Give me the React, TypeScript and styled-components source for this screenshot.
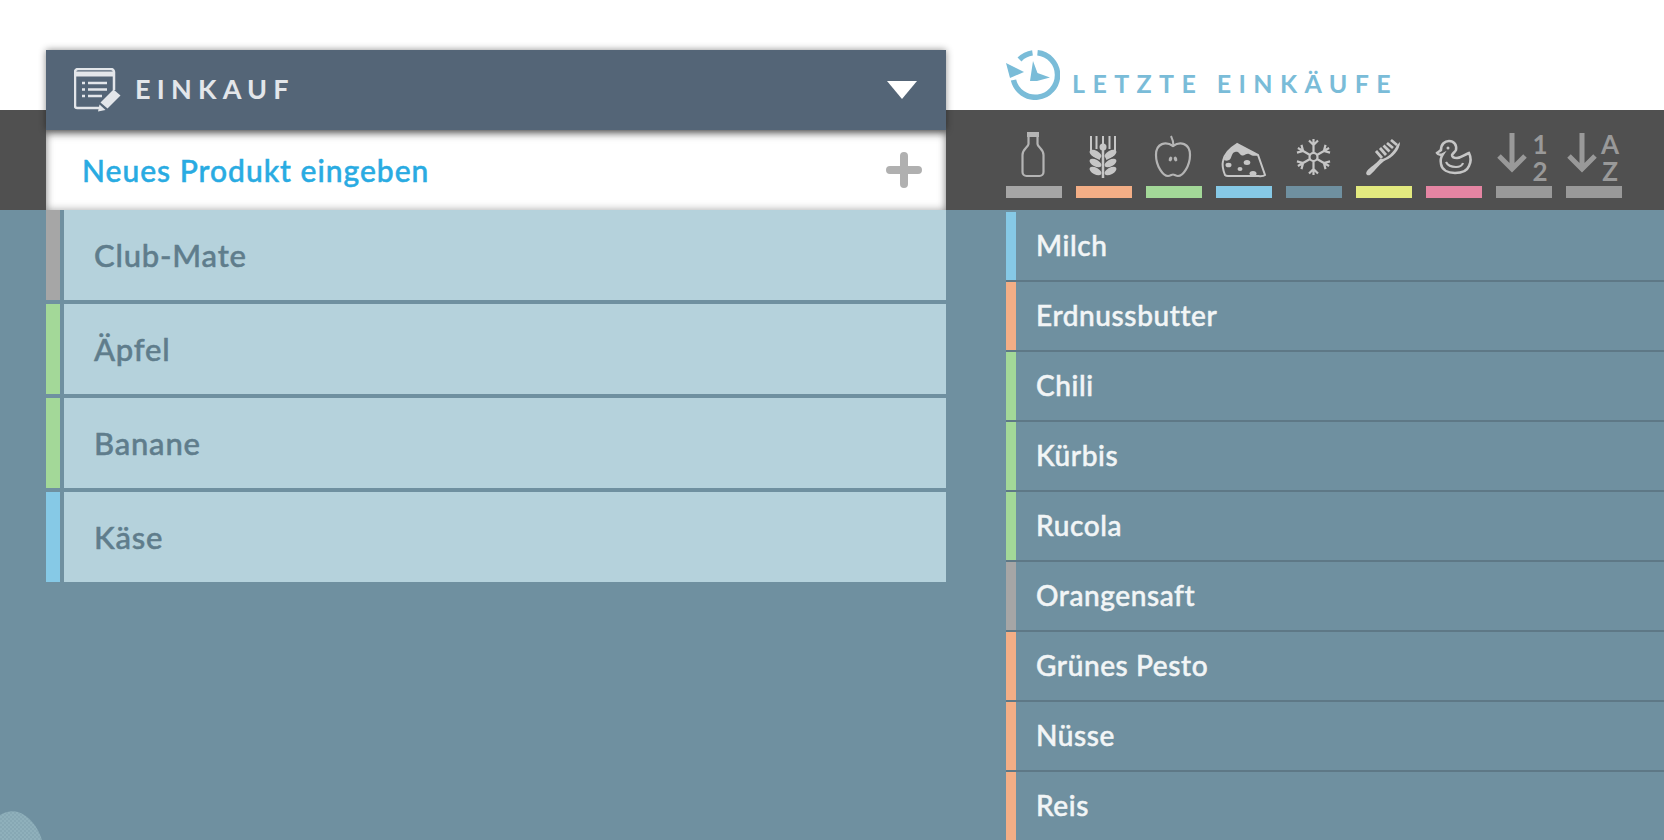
import styled, { createGlobalStyle } from "styled-components";

const GlobalStyle = createGlobalStyle`
  html, body { margin: 0; padding: 0; }
  body { font-family: "Lato", "Noto Sans", sans-serif; }
`;

const COLORS = {
  grey: "#a6a6a6",
  orange: "#f3ae86",
  green: "#a3d898",
  blue: "#86c9e6",
  teal: "#6f90a0",
  yellow: "#e3ea7f",
  pink: "#e585a3",
  sort: "#999999",
};

const Page = styled.div`
  position: relative;
  width: 1664px;
  height: 840px;
  overflow: hidden;
  display: flex;
  gap: 60px;
  padding-left: 46px;
  box-sizing: border-box;
  background: linear-gradient(
    to bottom,
    #fff 0 110px,
    #505050 110px 210px,
    #6f90a0 210px
  );
`;

const Shopping = styled.section`
  width: 900px;
  flex-shrink: 0;
  padding-top: 50px;
`;

const ShoppingHeader = styled.header`
  position: relative;
  z-index: 1;
  height: 80px;
  display: flex;
  align-items: center;
  padding: 0 29px 0 28px;
  background: #546577;
  box-shadow: 0 0 7px rgba(0, 0, 0, 0.45);
`;

const ShoppingTitle = styled.h1`
  margin: 0 0 4px 14px;
  flex: 1;
  font-size: 27px;
  font-weight: 700;
  letter-spacing: 6.2px;
  color: #e3e6ea;
`;

const NewProduct = styled.div`
  height: 80px;
  display: flex;
  align-items: center;
  justify-content: space-between;
  padding: 0 24px 0 36px;
  background: #fff;
  box-shadow: inset 0 6px 8px -2px rgba(0, 0, 0, 0.35),
    inset 0 0 9px rgba(0, 0, 0, 0.35);
`;

const NewProductLabel = styled.span`
  font-size: 30px;
  font-weight: 500;
  -webkit-text-stroke: 0.5px currentColor;
  letter-spacing: 1px;
  color: #29abe2;
`;

const ProductList = styled.ul`
  margin: 0;
  padding: 0;
  list-style: none;
  display: flex;
  flex-direction: column;
  gap: 4px;
`;

const Product = styled.li<{ $color: string }>`
  height: 90px;
  display: flex;
  align-items: center;
  padding-left: 48px;
  font-size: 31px;
  font-weight: 500;
  -webkit-text-stroke: 0.5px currentColor;
  letter-spacing: 0.8px;
  color: #5f7d8c;
  background: linear-gradient(
    to right,
    ${({ $color }) => $color} 0 14px,
    #6f90a0 14px 18px,
    #b5d2dc 18px
  );
`;

const Recent = styled.section`
  flex: 1;
  min-width: 0;
`;

const RecentTitle = styled.div`
  height: 110px;
  box-sizing: border-box;
  padding-top: 50px;
  display: flex;
  gap: 12px;
`;

const RecentLabel = styled.h2`
  margin: 19px 0 0;
  font-size: 25px;
  line-height: 28px;
  font-weight: 700;
  letter-spacing: 7.4px;
  color: #7abcd8;
`;

const Filters = styled.div`
  height: 102px;
  display: flex;
  gap: 14px;
`;

const Filter = styled.div<{ $color: string }>`
  width: 56px;
  height: 88px;
  padding-top: 20px;
  box-sizing: border-box;
  display: flex;
  flex-direction: column;
  gap: 4px;
  &::after {
    content: "";
    flex: 0 0 12px;
    background: ${({ $color }) => $color};
  }
`;

const FilterIcon = styled.svg`
  display: block;
  width: 56px;
  height: 52px;
  overflow: visible;
`;

const RecentList = styled.ul`
  margin: 0;
  padding: 0;
  list-style: none;
`;

const RecentItem = styled.li<{ $color: string }>`
  height: 70px;
  display: flex;
  align-items: center;
  padding: 0 0 2px 30px;
  box-sizing: border-box;
  font-size: 28px;
  font-weight: 500;
  -webkit-text-stroke: 0.5px currentColor;
  letter-spacing: 0.6px;
  color: #f2f5f6;
  border-bottom: 2px solid #5e7886;
  background: linear-gradient(
    to right,
    ${({ $color }) => $color} 0 10px,
    #6f90a0 10px
  );
`;

const Corner = styled.svg`
  position: absolute;
  left: 0;
  bottom: 0;
  width: 44px;
  height: 30px;
`;

const SortGlyph = styled.text`
  font-family: "Lato", sans-serif;
  font-size: 26px;
  font-weight: 700;
  fill: #999999;
  text-anchor: middle;
`;

const STROKE = "#b4b4b4";
const FILL = "#c6c6c6";

function BottleIcon() {
  return (
    <FilterIcon viewBox="0 0 56 52">
      <rect x="21" y="2" width="12" height="5" fill={STROKE} />
      <path
        d="M22.5 7v7c0 3-6 5-6 11v17a4 4 0 0 0 4 4h13a4 4 0 0 0 4-4V25c0-6-6-8-6-11V7"
        fill="none"
        stroke={STROKE}
        strokeWidth="2.200"
      />
    </FilterIcon>
  );
}

function WheatIcon() {
  const leaves = [24, 33, 41];
  return (
    <FilterIcon viewBox="0 0 56 52">
      <g stroke={FILL} strokeWidth="2" fill="none">
        <path d="M15 6v14c0 4 4 7 9 9M20.500 6v13M33.500 6v13M39 6v14c0 4-4 7-9 9" />
        <path d="M27 6v10" />
        <path d="M27 18v30" strokeWidth="2.500" />
      </g>
      <circle cx="27" cy="17" r="3.500" fill={FILL} />
      {leaves.map((y) => (
        <g key={y} fill={FILL}>
          <ellipse cx="19.500" cy={y} rx="6.500" ry="3.300" transform={`rotate(28 19.500 ${y})`} />
          <ellipse cx="34.500" cy={y} rx="6.500" ry="3.300" transform={`rotate(-28 34.500 ${y})`} />
        </g>
      ))}
    </FilterIcon>
  );
}

function AppleIcon() {
  return (
    <FilterIcon viewBox="0 0 56 52">
      <path
        d="M27 16C20 11 10 13 10 25c0 11 7 21 12 21 2 0 4-1.500 5-1.500s3 1.500 5 1.500c5 0 12-10 12-21 0-12-10-14-17-9Z"
        fill="none"
        stroke={STROKE}
        strokeWidth="2.200"
      />
      <path d="M27.500 16c0-4-1-7-2.500-10" fill="none" stroke={STROKE} strokeWidth="2" />
      <ellipse cx="24.500" cy="29" rx="1.700" ry="2.500" fill={STROKE} transform="rotate(20 24.500 29)" />
      <ellipse cx="29.500" cy="29" rx="1.700" ry="2.500" fill={STROKE} transform="rotate(-20 29.500 29)" />
    </FilterIcon>
  );
}

function CheeseIcon() {
  return (
    <FilterIcon viewBox="0 0 56 52">
      <path
        d="M9 45c-2-5-3-10-2-14 1-6 7-13 14-17l21 11 7 20c-2 2-6 1-9 1H12c-1 0-2 0-3-1Z"
        fill="none"
        stroke={FILL}
        strokeWidth="2"
      />
      <path
        d="M8 30c2-7 8-13 13-16l21 11c-4 2-7 0-9-1-3-1-5 3-8 1-2-1-2-4-6-3-4 1-3 7-6 8-2 1-3 1-5 0Z"
        fill={FILL}
      />
      <ellipse cx="12.500" cy="35" rx="3" ry="2.300" fill={FILL} />
      <ellipse cx="31" cy="32.500" rx="3.300" ry="2.500" fill={FILL} />
      <ellipse cx="24" cy="39" rx="2.500" ry="2" fill={FILL} />
      <ellipse cx="37" cy="43.500" rx="3.500" ry="2.500" fill={FILL} />
    </FilterIcon>
  );
}

function SnowflakeIcon() {
  return (
    <FilterIcon viewBox="0 0 56 52">
      <g stroke={FILL} strokeWidth="2.200" fill="none">
        {[0, 60, 120, 180, 240, 300].map((a) => (
          <path
            key={a}
            d="M27.500 23V9M23 10.500l4.500 4.500 4.500-4.500"
            transform={`rotate(${a} 27.500 27)`}
          />
        ))}
        <circle cx="27.500" cy="27" r="4" />
      </g>
    </FilterIcon>
  );
}

function BrushIcon() {
  return (
    <FilterIcon viewBox="0 0 56 52">
      <path
        d="M44 12c0 8-8 16-14 18-6 3-10 10-16 15-3 1-5-1-3-4 3-4 9-7 13-12 6 1 14-7 17-14Z"
        fill={FILL}
      />
      <path
        d="M26 28l-6-7M30 25l-6-7M33.500 21.500l-6-6M37 18l-6-5M41 15l-6-5"
        stroke={FILL}
        strokeWidth="2.800"
      />
    </FilterIcon>
  );
}

function DuckIcon() {
  return (
    <FilterIcon viewBox="0 0 56 52">
      <path
        d="M17 24c-2 1-5 1-6-1 1-1 3-2 4-3 0-6 4-9 8-9 5 0 8 4 7 9-1 2-3 3-4 5 0 2 2 3 5 3 4 0 7-3 12-5 2 4 2 9 0 13-2 5-8 7-14 7-7 0-13-3-14-9-1-4 0-7 2-10Z"
        fill="none"
        stroke={FILL}
        strokeWidth="2.500"
      />
      <path d="M20 32c2 4 6 5 10 5 3 0 6-1 7-4" fill="none" stroke={FILL} strokeWidth="2.200" />
      <circle cx="22" cy="18" r="1.500" fill={FILL} />
    </FilterIcon>
  );
}

function SortIcon({ top, bottom }: { top: string; bottom: string }) {
  return (
    <FilterIcon viewBox="0 0 56 52">
      <path
        d="M16 3v36M3 26l13 13 13-13"
        fill="none"
        stroke={COLORS.sort}
        strokeWidth="5"
      />
      <SortGlyph x="44" y="24">{top}</SortGlyph>
      <SortGlyph x="44" y="51">{bottom}</SortGlyph>
    </FilterIcon>
  );
}

const FILTERS = [
  { color: COLORS.grey, icon: <BottleIcon /> },
  { color: COLORS.orange, icon: <WheatIcon /> },
  { color: COLORS.green, icon: <AppleIcon /> },
  { color: COLORS.blue, icon: <CheeseIcon /> },
  { color: COLORS.teal, icon: <SnowflakeIcon /> },
  { color: COLORS.yellow, icon: <BrushIcon /> },
  { color: COLORS.pink, icon: <DuckIcon /> },
  { color: COLORS.sort, icon: <SortIcon top="1" bottom="2" /> },
  { color: COLORS.sort, icon: <SortIcon top="A" bottom="Z" /> },
];

const PRODUCTS = [
  { name: "Club-Mate", color: COLORS.grey },
  { name: "Äpfel", color: COLORS.green },
  { name: "Banane", color: COLORS.green },
  { name: "Käse", color: COLORS.blue },
];

const RECENT = [
  { name: "Milch", color: COLORS.blue },
  { name: "Erdnussbutter", color: COLORS.orange },
  { name: "Chili", color: COLORS.green },
  { name: "Kürbis", color: COLORS.green },
  { name: "Rucola", color: COLORS.green },
  { name: "Orangensaft", color: COLORS.grey },
  { name: "Grünes Pesto", color: COLORS.orange },
  { name: "Nüsse", color: COLORS.orange },
  { name: "Reis", color: COLORS.orange },
];

export default function App() {
  return (
    <Page>
      <GlobalStyle />
      <Shopping>
        <ShoppingHeader>
          <svg width="47" height="44" viewBox="0 0 47 44" fill="none">
            <path
              d="M40 22V4a3 3 0 0 0-3-3H4a3 3 0 0 0-3 3v34a2 2 0 0 0 2 2h22"
              stroke="#e3e6ea"
              strokeWidth="2.500"
            />
            <path d="M1 6h39" stroke="#e3e6ea" strokeWidth="5" />
            <path
              d="M8 15h3M14 15h19M8 21.500h3M14 21.500h19M8 28h3M14 28h14"
              stroke="#e3e6ea"
              strokeWidth="2.500"
            />
            <path d="M24 43.500l1.500-7 6 5.500Z" fill="#e3e6ea" />
            <path d="M26.500 34.500l13-13 7 6-13 13Z" fill="#e3e6ea" />
          </svg>
          <ShoppingTitle>EINKAUF</ShoppingTitle>
          <svg width="30" height="18" viewBox="0 0 30 18">
            <path d="M0 0h30L15 18Z" fill="#fff" />
          </svg>
        </ShoppingHeader>
        <NewProduct>
          <NewProductLabel>Neues Produkt eingeben</NewProductLabel>
          <svg width="36" height="36" viewBox="0 0 36 36">
            <path
              d="M18 4v28M4 18h28"
              stroke="#b0b0b0"
              strokeWidth="8"
              strokeLinecap="round"
            />
          </svg>
        </NewProduct>
        <ProductList>
          {PRODUCTS.map((p) => (
            <Product key={p.name} $color={p.color}>
              {p.name}
            </Product>
          ))}
        </ProductList>
      </Shopping>
      <Recent>
        <RecentTitle>
          <svg width="54" height="50" viewBox="0 0 54 50" fill="none">
            <path
              d="M31.500 2.800A22.300 22.300 0 1 1 7.500 30"
              stroke="#7abcd8"
              strokeWidth="5.500"
            />
            <path d="M13.500 9.500A22.300 22.300 0 0 1 26.500 2.900" stroke="#7abcd8" strokeWidth="5.500" />
            <path d="M0 13l18 9-14 6Z" fill="#7abcd8" />
            <path d="M27 11l4.500 12 12.500 4.500-13 3.500h-7Z" fill="#7abcd8" />
          </svg>
          <RecentLabel>LETZTE EINKÄUFE</RecentLabel>
        </RecentTitle>
        <Filters>
          {FILTERS.map((f, i) => (
            <Filter key={i} $color={f.color}>
              {f.icon}
            </Filter>
          ))}
        </Filters>
        <RecentList>
          {RECENT.map((r) => (
            <RecentItem key={r.name} $color={r.color}>
              {r.name}
            </RecentItem>
          ))}
        </RecentList>
      </Recent>
      <Corner viewBox="0 0 44 30">
        <defs>
          <pattern id="dots" width="4" height="4" patternUnits="userSpaceOnUse">
            <rect width="4" height="4" fill="#8fb0bb" />
            <circle cx="1" cy="1" r="0.800" fill="#7d9fac" />
            <circle cx="3" cy="3" r="0.800" fill="#7d9fac" />
          </pattern>
        </defs>
        <path d="M0 5C5 2 12 0 18 2c10 3 20 14 24 28H0Z" fill="url(#dots)" />
      </Corner>
    </Page>
  );
}
